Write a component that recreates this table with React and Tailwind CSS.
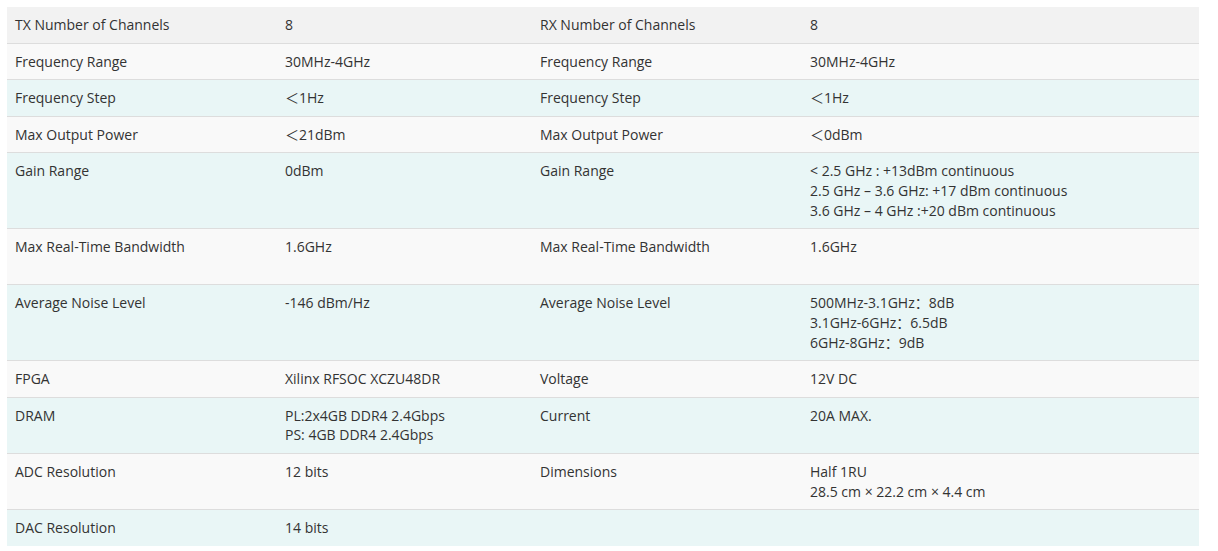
import React from 'react';

const rows = [
  { a: 'TX Number of Channels', b: ['8'], c: 'RX Number of Channels', d: ['8'], bg: 'bg-[#f2f2f2]' },
  { a: 'Frequency Range', b: ['30MHz-4GHz'], c: 'Frequency Range', d: ['30MHz-4GHz'], bg: 'bg-[#f9f9f9]' },
  { a: 'Frequency Step', b: ['＜1Hz'], c: 'Frequency Step', d: ['＜1Hz'], bg: 'bg-[#e9f6f6]' },
  { a: 'Max Output Power', b: ['＜21dBm'], c: 'Max Output Power', d: ['＜0dBm'], bg: 'bg-[#f9f9f9]' },
  {
    a: 'Gain Range',
    b: ['0dBm'],
    c: 'Gain Range',
    d: ['< 2.5 GHz : +13dBm continuous', '2.5 GHz – 3.6 GHz: +17 dBm continuous', '3.6 GHz – 4 GHz :+20 dBm continuous'],
    bg: 'bg-[#e9f6f6]',
  },
  { a: 'Max Real-Time Bandwidth', b: ['1.6GHz', '\u00a0'], c: 'Max Real-Time Bandwidth', d: ['1.6GHz'], bg: 'bg-[#f9f9f9]' },
  {
    a: 'Average Noise Level',
    b: ['-146 dBm/Hz'],
    c: 'Average Noise Level',
    d: ['500MHz-3.1GHz：8dB', '3.1GHz-6GHz：6.5dB', '6GHz-8GHz：9dB'],
    bg: 'bg-[#e9f6f6]',
  },
  { a: 'FPGA', b: ['Xilinx RFSOC XCZU48DR'], c: 'Voltage', d: ['12V DC'], bg: 'bg-[#f9f9f9]' },
  { a: 'DRAM', b: ['PL:2x4GB DDR4 2.4Gbps', 'PS: 4GB DDR4 2.4Gbps'], c: 'Current', d: ['20A MAX.'], bg: 'bg-[#e9f6f6]' },
  { a: 'ADC Resolution', b: ['12 bits'], c: 'Dimensions', d: ['Half 1RU', '28.5 cm × 22.2 cm × 4.4 cm'], bg: 'bg-[#f9f9f9]' },
  { a: 'DAC Resolution', b: ['14 bits'], c: '', d: [''], bg: 'bg-[#e9f6f6]' },
];

const Cell = ({ lines }) => (
  <div className="px-2 py-2">
    {lines.map((l, i) => (
      <div key={i}>{l || '\u00a0'}</div>
    ))}
  </div>
);

const App = () => {
  return (
    <div className="min-h-[551px] bg-white pt-[7px] pl-[7px] font-['Open_Sans','Noto_Sans_CJK_SC',sans-serif] text-[14px] leading-[1.4] text-[#333]">
      <div className="w-[1192px]">
        {rows.map((r, i) => (
          <div
            key={i}
            className={`grid grid-cols-[270px_255px_270px_1fr] ${r.bg} ${i < rows.length - 1 ? 'border-b border-[#dddddd]' : ''}`}
          >
            <Cell lines={[r.a]} />
            <Cell lines={r.b} />
            <Cell lines={[r.c]} />
            <Cell lines={r.d} />
          </div>
        ))}
      </div>
    </div>
  );
};

export default App;
